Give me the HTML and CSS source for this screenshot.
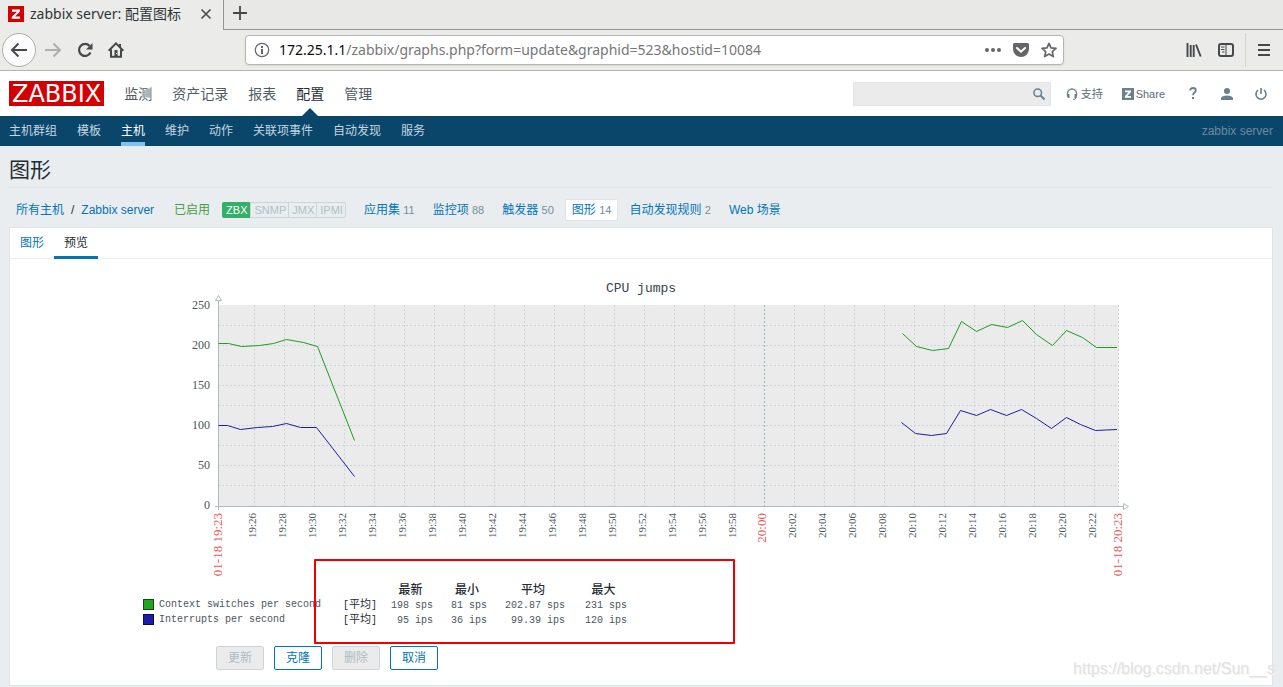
FILE: index.html
```html
<!DOCTYPE html>
<html lang="zh-CN">
<head>
<meta charset="utf-8">
<title>zabbix server: 配置图标</title>
<link rel="stylesheet" href="styles.css">
</head>
<body>
<div class="browser">
  <div class="tabstrip">
    <div class="browser-tab">
      <svg class="favicon" width="16" height="16" viewBox="0 0 16 16"><rect width="16" height="16" fill="#d40000"/><path d="M4 3.500h8v2L7 10.500h5v2.200H3.800v-2L8.900 5.700H4z" fill="#fff"/></svg>
      <span class="browser-tab-title">zabbix server: 配置图标</span>
      <button class="icon-button tab-close" aria-label="关闭标签页"><svg width="12" height="12" viewBox="0 0 12 12"><path d="M1.500 1.500l9 9M10.500 1.500l-9 9" stroke="#4c5052" stroke-width="1.700"/></svg></button>
    </div>
    <div class="tabstrip-rest">
      <button class="icon-button" aria-label="新标签页"><svg width="16" height="16" viewBox="0 0 16 16"><path d="M8 1v14M1 8h14" stroke="#44484a" stroke-width="1.800"/></svg></button>
    </div>
  </div>
  <div class="toolbar">
    <div class="toolbar-nav">
      <button class="icon-button back-button" aria-label="后退"><svg width="18" height="16" viewBox="0 0 18 16"><path d="M17 8H2M8.500 1.500L2 8l6.500 6.500" fill="none" stroke="#45494b" stroke-width="2"/></svg></button>
      <button class="icon-button" aria-label="前进"><svg width="18" height="16" viewBox="0 0 18 16"><path d="M1 8h15M9.500 1.500L16 8l-6.500 6.500" fill="none" stroke="#afafae" stroke-width="2"/></svg></button>
      <button class="icon-button" aria-label="刷新"><svg width="16" height="16" viewBox="0 0 16 16"><path d="M12.600 4A6 6 0 1 0 13.500 10.500" fill="none" stroke="#45494b" stroke-width="2.200"/><path d="M15.500 1v6.500H9z" fill="#45494b"/></svg></button>
      <button class="icon-button" aria-label="主页"><svg width="16" height="16" viewBox="0 0 16 16"><path d="M.7 8.700L8 1.400l7.300 7.300M3 7.500v7.300h10V7.500" fill="none" stroke="#45494b" stroke-width="2"/><path d="M11 2h2v4l-2-2zM6.500 8h3v6h-3z" fill="#45494b"/><path d="M8 11h1v1H8z" fill="#fff"/></svg></button>
    </div>
    <div class="urlbar">
      <svg width="16" height="16" viewBox="0 0 16 16"><circle cx="8" cy="8" r="6.700" fill="none" stroke="#666" stroke-width="1.200"/><path d="M7 7h2v5H7zM7 4h2v2H7z" fill="#666"/></svg>
      <div class="url"><span class="url-host">172.25.1.1</span>/zabbix/graphs.php?form=update&amp;graphid=523&amp;hostid=10084</div>
      <div class="urlbar-actions">
        <svg width="16" height="16" viewBox="0 0 16 16" fill="#666"><circle cx="2" cy="8" r="2"/><circle cx="8" cy="8" r="2"/><circle cx="14" cy="8" r="2"/></svg>
        <svg width="16" height="16" viewBox="0 0 16 16"><path d="M1.500 1h13Q16 1 16 2.500V7a8 8 0 0 1-16 0V2.500Q0 1 1.500 1z" fill="#666"/><path d="M4 6l4 3.700L12 6" fill="none" stroke="#fff" stroke-width="2" stroke-linecap="round"/></svg>
        <svg width="16" height="16" viewBox="0 0 16 16"><path d="M8 1.300l2 4.500 5 .6-3.700 3.300 1 4.900L8 12.100l-4.300 2.500 1-4.900L1 6.400l5-.6z" fill="none" stroke="#666" stroke-width="1.700" stroke-linejoin="round"/></svg>
      </div>
    </div>
    <div class="toolbar-tools">
      <button class="icon-button" aria-label="书库"><svg width="16" height="16" viewBox="0 0 16 16"><path d="M1.500 1v14M4.700 3v12M7.700 3v12M10 2.500l4.700 12" stroke="#45494b" stroke-width="1.900" fill="none"/></svg></button>
      <button class="icon-button" aria-label="侧栏"><svg width="16" height="16" viewBox="0 0 16 16"><rect x="1" y="2" width="14" height="12" rx="2" fill="none" stroke="#45494b" stroke-width="2"/><path d="M8 2v12M3 5h3.500M3 7.500h3.500M4 10h2.500" stroke="#45494b" stroke-width="1"/></svg></button>
      <span class="toolbar-separator"></span>
      <button class="icon-button" aria-label="菜单"><svg width="12" height="14" viewBox="0 0 12 14"><path d="M0 2h12M0 7h12M0 12h12" stroke="#45494b" stroke-width="2"/></svg></button>
    </div>
  </div>
</div>

<header class="site-header">
  <a class="logo" href="#">ZABBIX</a>
  <nav class="main-menu">
    <a href="#">监测</a>
    <a href="#">资产记录</a>
    <a href="#">报表</a>
    <a class="selected" href="#">配置</a>
    <a href="#">管理</a>
  </nav>
  <div class="header-tools">
    <form class="search">
      <input type="text" aria-label="搜索">
      <button type="button" class="icon-button" aria-label="搜索"><svg width="12" height="12" viewBox="0 0 12 12"><circle cx="4.700" cy="4.700" r="3.800" fill="none" stroke="#69808d" stroke-width="1.500"/><path d="M7.500 7.500l4 4" stroke="#69808d" stroke-width="2"/></svg></button>
    </form>
    <a class="tool support" href="#"><svg width="12" height="12" viewBox="0 0 12 12"><path d="M1.500 8V5.500a4.500 4.500 0 0 1 9 0V8" fill="none" stroke="#69808d" stroke-width="1.300"/><path d="M1 6h2.500v4H2.300Q1 9.500 1 8zM11 6H8.500v4H10q1-.5 1-2z" fill="#69808d"/><path d="M10 9.500q0 2-3 2" fill="none" stroke="#69808d"/></svg>支持</a>
    <a class="tool share" href="#"><svg width="12" height="12" viewBox="0 0 12 12"><rect width="12" height="12" fill="#69808d"/><path d="M3 2.500h6v1.700L5.300 8H9v1.700H2.900V8l3.700-3.800H3z" fill="#fff"/></svg>Share</a>
    <a class="tool help" href="#" aria-label="帮助"><svg width="8" height="13" viewBox="0 0 8 13"><path d="M1.200 3.500Q1.200 1 4 1t2.800 2.400C6.800 5.500 4 5.500 4 8.300" fill="none" stroke="#69808d" stroke-width="1.800"/><path d="M3 10h2v2H3z" fill="#69808d"/></svg></a>
    <a class="tool profile" href="#" aria-label="用户"><svg width="12" height="12" viewBox="0 0 12 12" fill="#69808d"><circle cx="6" cy="3" r="3"/><path d="M0 12v-2q1-2.500 6-2.500T12 10v2z"/></svg></a>
    <a class="tool signout" href="#" aria-label="退出"><svg width="12" height="12" viewBox="0 0 12 12"><path d="M3 2.200a5 5 0 1 0 6 0M6 0v6" fill="none" stroke="#69808d" stroke-width="1.600"/></svg></a>
  </div>
</header>

<nav class="sub-menu">
  <a href="#">主机群组</a>
  <a href="#">模板</a>
  <a class="selected" href="#">主机</a>
  <a href="#">维护</a>
  <a href="#">动作</a>
  <a href="#">关联项事件</a>
  <a href="#">自动发现</a>
  <a href="#">服务</a>
  <span class="server-name">zabbix server</span>
</nav>

<main class="content">
  <h1 class="page-title">图形</h1>

  <div class="host-nav">
    <span class="crumbs"><a href="#">所有主机</a><span class="slash">/</span><a href="#">Zabbix server</a></span>
    <span class="enabled">已启用</span>
    <span class="availability"><span class="on">ZBX</span><span>SNMP</span><span>JMX</span><span>IPMI</span></span>
    <span class="entities">
      <a href="#">应用集 <span class="count">11</span></a>
      <a href="#">监控项 <span class="count">88</span></a>
      <a href="#">触发器 <span class="count">50</span></a>
      <a class="current" href="#">图形 <span class="count">14</span></a>
      <a href="#">自动发现规则 <span class="count">2</span></a>
      <a href="#">Web 场景</a>
    </span>
  </div>

  <section class="panel">
    <div class="tabs">
      <a href="#">图形</a>
      <a class="active" href="#">预览</a>
    </div>

    <div class="graph">
      <svg class="chart" viewBox="0 0 1000 324" role="img" aria-label="CPU jumps">
        <text class="chart-title" x="500" y="33">CPU jumps</text>
        <g transform="translate(77 46)">
          <rect class="plot" width="900" height="201"/>
          <path class="grid" d="M0 20.500H900M0 40.500H900M0 60.500H900M0 80.500H900M0 100.500H900M0 120.500H900M0 140.500H900M0 160.500H900M0 180.500H900"/>
          <path class="grid" d="M36.500 0V201M66.500 0V201M96.500 0V201M126.500 0V201M156.500 0V201M186.500 0V201M216.500 0V201M246.500 0V201M276.500 0V201M306.500 0V201M336.500 0V201M366.500 0V201M396.500 0V201M426.500 0V201M456.500 0V201M486.500 0V201M516.500 0V201M576.500 0V201M606.500 0V201M636.500 0V201M666.500 0V201M696.500 0V201M726.500 0V201M756.500 0V201M786.500 0V201M816.500 0V201M846.500 0V201M876.500 0V201M900.500 0V201"/>
          <path class="grid hour" d="M546.500 0V201"/>
          <path class="axis" d="M.5 -5V205M-3 201.500H905"/>
          <path class="arrow" d="M-2.500 -4.500h6L.5 -9.500zM905.500 198.500v6L910.500 201.500z"/>
          <polyline class="switches" points="0.500,38.500 10.500,38.500 23.500,41.500 41.500,40.500 55.500,38.500 68.500,34.500 85.500,37.500 99.500,41.500 136.500,135.500"/>
          <polyline class="switches" points="684.500,28.500 698.500,41.500 714.500,45.500 730.500,43.500 743.500,16.500 758.500,26.500 773.500,19.500 789.500,22.500 804.500,15.500 818.500,29.500 834.500,40.500 848.500,25.500 864.500,32.500 878.500,42.500 899,42.500"/>
          <polyline class="interrupts" points="0.500,120.500 9.500,120.500 22.500,124.500 39.500,122.500 54.500,121.500 68.500,118.500 82.500,122.500 98.500,122.500 136.500,171.500"/>
          <polyline class="interrupts" points="683.500,117.500 697.500,128.500 713.500,130.500 728.500,128.500 742.500,105.500 758.500,110.500 772.500,104.500 788.500,110.500 803.500,104.500 818.500,113.500 833.500,123.500 848.500,112.500 862.500,119.500 877.500,125.500 899,124.500"/>
          <g class="y-labels">
            <text x="-8" y="4">250</text><text x="-8" y="44">200</text><text x="-8" y="84">150</text><text x="-8" y="124">100</text><text x="-8" y="164">50</text><text x="-8" y="204">0</text>
          </g>
          <g class="x-labels" transform="rotate(-90)">
            <text x="-208" y="38">19:26</text><text x="-208" y="68">19:28</text><text x="-208" y="98">19:30</text><text x="-208" y="128">19:32</text><text x="-208" y="158">19:34</text><text x="-208" y="188">19:36</text><text x="-208" y="218">19:38</text><text x="-208" y="248">19:40</text><text x="-208" y="278">19:42</text><text x="-208" y="308">19:44</text><text x="-208" y="338">19:46</text><text x="-208" y="368">19:48</text><text x="-208" y="398">19:50</text><text x="-208" y="428">19:52</text><text x="-208" y="458">19:54</text><text x="-208" y="488">19:56</text><text x="-208" y="518">19:58</text><text x="-208" y="578">20:02</text><text x="-208" y="608">20:04</text><text x="-208" y="638">20:06</text><text x="-208" y="668">20:08</text><text x="-208" y="698">20:10</text><text x="-208" y="728">20:12</text><text x="-208" y="758">20:14</text><text x="-208" y="788">20:16</text><text x="-208" y="818">20:18</text><text x="-208" y="848">20:20</text><text x="-208" y="878">20:22</text>
            <text class="major" x="-208" y="4">01-18 19:23</text><text class="major" x="-208" y="548">20:00</text><text class="major" x="-208" y="904">01-18 20:23</text>
          </g>
        </g>
      </svg>
      <table class="legend">
        <thead>
          <tr><th class="item"></th><th class="func"></th><th class="last">最新</th><th class="min">最小</th><th class="avg">平均</th><th class="max">最大</th></tr>
        </thead>
        <tbody>
          <tr><td><span class="swatch green"></span>Context switches per second</td><td class="cjk">[<span>平均</span>]</td><td class="last">198 sps</td><td class="min">81 sps</td><td class="avg">202.87 sps</td><td class="max">231 sps</td></tr>
          <tr><td><span class="swatch blue"></span>Interrupts per second</td><td class="cjk">[<span>平均</span>]</td><td class="last">95 ips</td><td class="min">36 ips</td><td class="avg">99.39 ips</td><td class="max">120 ips</td></tr>
        </tbody>
      </table>
      <div class="highlight"></div>
    </div>

    <div class="actions">
      <button disabled>更新</button>
      <button>克隆</button>
      <button disabled>删除</button>
      <button>取消</button>
    </div>
  </section>
  <div class="watermark">https://blog.csdn.net/Sun__s</div>
</main>
</body>
</html>
```
FILE: styles.css
```css
* { box-sizing: border-box; }
body {
  margin: 0;
  background: #e9edf0;
  color: #1f2c33;
  font: 12px/18px "Liberation Sans", "Noto Sans CJK SC", sans-serif;
}
a { color: #0275b8; text-decoration: none; }
svg { display: block; flex: none; }
.icon-button {
  display: flex;
  align-items: center;
  justify-content: center;
  padding: 0;
  border: 0;
  background: none;
}

/* Browser window */
.browser {
  background: #ebebe9;
  border-bottom: 1px solid #b5b5b0;
  font: 14px/20px "Noto Sans", "Noto Sans CJK SC", sans-serif;
}
.tabstrip { display: flex; height: 30px; background: #e8e8e6; }
.browser-tab {
  display: flex;
  align-items: center;
  width: 224px;
  padding: 0 11px 2px 8px;
  border-right: 1px solid #94958f;
  background: #ebebe9;
  color: #2e3436;
}
.browser-tab-title { flex: 1; margin-left: 6px; white-space: nowrap; }
.tabstrip-rest {
  display: flex;
  flex: 1;
  align-items: center;
  padding: 0 8px 3px;
  border-bottom: 1px solid #94958f;
}
.toolbar { display: flex; align-items: center; height: 40px; }
.toolbar-nav { display: flex; flex: 0 0 245px; align-items: center; gap: 15px; padding-left: 2px; }
.toolbar-nav .back-button { width: 34px; height: 34px; margin-right: -7px; border: 1px solid #acaca9; border-radius: 50%; background: #fcfcfc; }
.urlbar {
  display: flex;
  flex: 1;
  align-items: center;
  height: 30px;
  padding: 0 6px 0 8px;
  border: 1px solid #b5b5b1;
  border-radius: 4px;
  background: #fff;
  box-shadow: 0 1px 2px #d8d8d6;
}
.url { flex: 1; margin-left: 9px; color: #777; white-space: nowrap; }
.url-host { color: #0c0c0d; }
.urlbar-actions { display: flex; gap: 12px; }
.toolbar-tools { display: flex; flex: 0 0 219px; align-items: center; justify-content: flex-end; gap: 16px; padding-right: 13px; }
.toolbar-separator { width: 1px; height: 34px; margin: 0 -4px 0 -5px; background: #cfcfcc; }

/* Header */
.site-header { display: flex; align-items: center; height: 45px; padding: 0 16px 0 9px; background: #fff; }
.logo {
  height: 25px;
  padding: 0 3px;
  background: #d40000;
  color: #fff;
  font: 24px/26px "DejaVu Sans", sans-serif;
}
.main-menu { display: flex; align-self: stretch; margin-left: 10px; }
.main-menu a { position: relative; padding: 0 10px; color: #4f5c63; font-size: 14px; line-height: 46px; }
.main-menu .selected { color: #1f2c33; }
.main-menu .selected::after {
  content: "";
  position: absolute;
  bottom: 0;
  left: 50%;
  margin-left: -8px;
  border: 8px solid transparent;
  border-top: 0;
  border-bottom-color: #0a466a;
}
.header-tools { display: flex; align-items: center; margin-left: auto; }
.search { display: flex; width: 198px; height: 24px; padding-right: 5px; border: 1px solid #e3e5e6; background: #ebebeb; }
.search input { flex: 1; min-width: 0; border: 0; background: none; }
.tool { display: flex; align-items: center; gap: 2px; color: #5c6d78; font-size: 11px; }
.support { gap: 3px; margin-left: 15px; }
.share { margin-left: 19px; }
.help { margin-left: 24px; }
.profile { margin-left: 24px; }
.signout { margin-left: 22px; }

.sub-menu { display: flex; gap: 20px; height: 30px; padding: 0 10px 0 9px; background: #0a466a; }
.sub-menu a { color: #c3d6e2; line-height: 30px; }
.sub-menu .selected { height: 30px; border-bottom: 4px solid #7ec3ef; color: #fff; }
.server-name { margin-left: auto; color: #6a8a9e; line-height: 30px; }

/* Page */
.content { position: relative; padding: 0 10px 1px 9px; }
.page-title {
  margin: 0;
  height: 42px;
  border-bottom: 1px solid #dfe4e7;
  font-size: 21px;
  font-weight: 400;
  line-height: 48px;
}
.host-nav { display: flex; align-items: center; height: 39px; padding: 5px 7px 0; white-space: nowrap; }
.slash { margin: 0 7px; }
.enabled { margin: 0 12px 0 20px; color: #429e47; }
.availability { display: flex; border: 1px solid #ccd5d9; border-radius: 2px; font-size: 11px; line-height: 14px; }
.availability span { padding: 0 2px 0 3px; color: #b3bfc5; }
.availability span + span { border-left: 1px solid #ccd5d9; }
.availability .on { margin: -1px 0 -1px -1px; padding: 1px 3px 0 4px; border-radius: 2px 0 0 2px; background: #34af67; color: #fff; }
.entities { display: flex; margin-left: 11px; gap: 4px; }
.entities a { padding: 1px 6px; border: 1px solid transparent; border-radius: 2px; }
.entities .current { border-color: #dfe4e7; background: #fff; }
.count { color: #768d99; font-size: 11px; }

.panel { border: 1px solid #dfe4e7; background: #fff; }
.tabs { display: flex; height: 31px; border-bottom: 1px solid #ebeef0; }
.tabs a { height: 31px; padding: 0 10px; line-height: 30px; }
.tabs .active { border-bottom: 3px solid #0275b8; color: #1f2c33; }

.graph { position: relative; max-width: 1000px; margin: 0 auto; }
.chart { width: 100%; font: 11px "Liberation Serif", serif; }
.chart-title { fill: #37444b; font: 13px "Liberation Mono", monospace; text-anchor: middle; }
.plot { fill: #ebebeb; }
.grid { fill: none; stroke: #ccd5d9; stroke-dasharray: 2 2; }
.hour { stroke: #9fb3bd; }
.axis { fill: none; stroke: #acbbc2; }
.arrow { fill: #fff; stroke: #acbbc2; }
.switches, .interrupts { fill: none; stroke: #1a9f1a; }
.interrupts { stroke: #1c1ca8; }
.y-labels { fill: #4a565c; font-size: 12px; text-anchor: end; }
.x-labels { fill: #4a565c; text-anchor: end; }
.major { fill: #e85a5a; font-size: 13px; }

.legend {
  width: 484px;
  margin-left: 2px;
  border-collapse: collapse;
  table-layout: fixed;
  color: #4a565c;
  font: 10px/14px "Liberation Mono", "Noto Sans CJK SC", monospace;
}
.legend tr { height: 14px; }
.legend th, .legend td { padding: 2px 0 0; white-space: nowrap; line-height: 12px; }
.legend th { color: #1f2c33; font-size: 12px; font-weight: 500; }
.legend td { text-align: left; }
.legend .item { width: 200px; }
.legend .func { width: 40px; }
.legend .last { width: 50px; padding-left: 5px; }
.legend .min { width: 54px; padding-left: 14px; }
.legend .avg { width: 78px; padding-left: 14px; }
.legend .max { width: 62px; padding-left: 15px; }
.legend td.last, .legend td.min, .legend td.avg, .legend td.max { text-align: right; }
.legend .cjk { color: #1f2c33; }
.legend .cjk span { font-size: 11px; }
.swatch { display: inline-block; width: 11px; height: 11px; margin-right: 5px; border: 1px solid #0b4d0b; background: #1fa51f; vertical-align: middle; }
.blue { border-color: #0a0a4d; background: #1c1ca8; }
.highlight { position: absolute; left: 173px; top: 300px; width: 421px; height: 85px; border: 2px solid #f00000; border-radius: 1px; }

.actions { display: flex; gap: 10px; padding: 19px 0 15px 206px; }
.actions button {
  height: 24px;
  padding: 0 11px;
  border: 1px solid #0275b8;
  border-radius: 2px;
  background: #fff;
  color: #0275b8;
  font: 12px/22px "Liberation Sans", "Noto Sans CJK SC", sans-serif;
}
.actions button:disabled { border-color: #ccd5d9; background: #ebebeb; color: #acbbc2; }
.watermark { position: absolute; right: 8px; bottom: 8px; color: #e2e2e2; font-size: 16px; line-height: 20px; text-shadow: 1px 1px #f4f4f4; }
```
